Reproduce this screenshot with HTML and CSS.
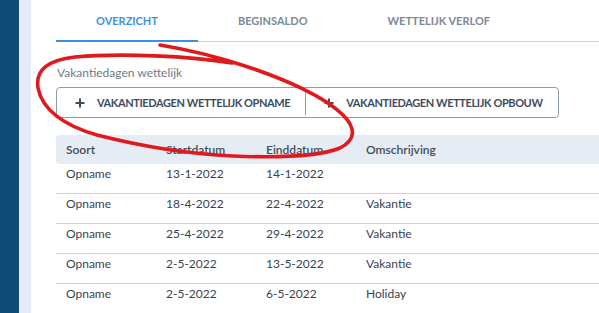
FILE: index.html
```html
<!DOCTYPE html>
<html lang="nl">
<head>
<meta charset="utf-8">
<title>Vakantiedagen</title>
<link rel="stylesheet" href="styles.css">
</head>
<body>
<div class="app">
  <aside class="sidebar"></aside>
  <div class="gutter"></div>
  <main class="main">
    <nav class="tabs">
      <a class="tab tab-active">OVERZICHT</a>
      <a class="tab">BEGINSALDO</a>
      <a class="tab">WETTELIJK VERLOF</a>
    </nav>
    <section class="section">
      <div class="section-label">Vakantiedagen wettelijk</div>
      <div class="btn-group">
        <button class="btn">
          <svg class="plus" width="10" height="10" viewBox="0 0 10 10"><path d="M5 0.5V9.5M0.5 5H9.5" stroke="currentColor" stroke-width="2" fill="none"/></svg>
          <span>VAKANTIEDAGEN WETTELIJK OPNAME</span>
        </button>
        <span class="btn-sep"></span>
        <button class="btn">
          <svg class="plus" width="10" height="10" viewBox="0 0 10 10"><path d="M5 0.5V9.5M0.5 5H9.5" stroke="currentColor" stroke-width="2" fill="none"/></svg>
          <span>VAKANTIEDAGEN WETTELIJK OPBOUW</span>
        </button>
      </div>
    </section>
    <table class="grid">
      <thead>
        <tr><th>Soort</th><th>Startdatum</th><th>Einddatum</th><th>Omschrijving</th></tr>
      </thead>
      <tbody>
        <tr><td>Opname</td><td>13-1-2022</td><td>14-1-2022</td><td></td></tr>
        <tr><td>Opname</td><td>18-4-2022</td><td>22-4-2022</td><td>Vakantie</td></tr>
        <tr><td>Opname</td><td>25-4-2022</td><td>29-4-2022</td><td>Vakantie</td></tr>
        <tr><td>Opname</td><td>2-5-2022</td><td>13-5-2022</td><td>Vakantie</td></tr>
        <tr><td>Opname</td><td>2-5-2022</td><td>6-5-2022</td><td>Holiday</td></tr>
      </tbody>
    </table>
  </main>
  <svg class="scribble" width="599" height="313" viewBox="0 0 599 313">
    <path d="M160,45 C190,50 215,56 245,66 C285,79 325,97 343,115 C356,128 356,140 340,148 C320,156 280,158 233,156 C190,154 140,146 97,135 C65,126 42,110 38,88 C35,70 48,60 75,57 C120,53 190,56 232,63" fill="none" stroke="#e01a1c" stroke-width="3.6" stroke-linecap="round" stroke-linejoin="round"/>
  </svg>
</div>
</body>
</html>
```
FILE: styles.css
```css
* { box-sizing: border-box; }
html, body { margin: 0; padding: 0; }
body {
  font-family: Lato, "Open Sans", sans-serif;
  color: #384250;
  background: #fff;
  width: 599px;
  height: 313px;
  overflow: hidden;
}
.app {
  position: relative;
  display: flex;
  height: 313px;
}
.sidebar {
  width: 19px;
  flex: none;
  background: #0f4c75;
}
.gutter {
  width: 12px;
  flex: none;
  background: #e4ebf4;
}
.main {
  flex: 1;
  min-width: 0;
  padding-left: 25px;
}
.tabs {
  display: flex;
  height: 42px;
  border-bottom: 1px solid #cdd3da;
}
.tab {
  height: 42px;
  margin-bottom: -1px;
  padding: 0 40px 1px;
  display: flex;
  align-items: center;
  font-size: 11px;
  font-weight: 700;
  color: #7d8896;
  white-space: nowrap;
}
.tab-active {
  color: #3b8fe4;
  border-bottom: 2px solid #3b8fe4;
  padding-top: 2px;
}
.section {
  padding-top: 23px;
}
.section-label {
  font-size: 12px;
  line-height: 16px;
  color: #6e7a88;
  padding-left: 1px;
}
.btn-group {
  margin-top: 6px;
  display: inline-flex;
  align-items: center;
  height: 31px;
  border: 1px solid #8d9bab;
  border-radius: 4px;
}
.btn {
  display: flex;
  align-items: center;
  gap: 12px;
  height: 29px;
  padding: 0 15px 0 18px;
  border: 0;
  background: none;
  font-family: inherit;
  font-size: 11px;
  font-weight: 700;
  letter-spacing: -0.4px;
  color: #3e4c5e;
  white-space: nowrap;
}
.plus { flex: none; color: #3e4c5e; }
.btn-sep {
  width: 1px;
  height: 24px;
  background: #8d9bab;
}
.grid {
  margin-top: 17px;
  width: 100%;
  border-collapse: separate;
  border-spacing: 0;
  font-size: 12px;
}
.grid th {
  height: 29px;
  padding: 0 10px;
  text-align: left;
  font-weight: 600;
  color: #3e4c5e;
  background: #e6ecf4;
  width: 100px;
}
.grid th:first-child { border-radius: 4px 0 0 4px; }
.grid th:last-child { width: auto; }
.grid td {
  height: 30px;
  padding: 1px 10px 10px;
  line-height: 18px;
  border-bottom: 1px solid #d2d2d2;
  vertical-align: top;
  white-space: nowrap;
}
.scribble {
  position: absolute;
  left: 0;
  top: 0;
  pointer-events: none;
}
```
